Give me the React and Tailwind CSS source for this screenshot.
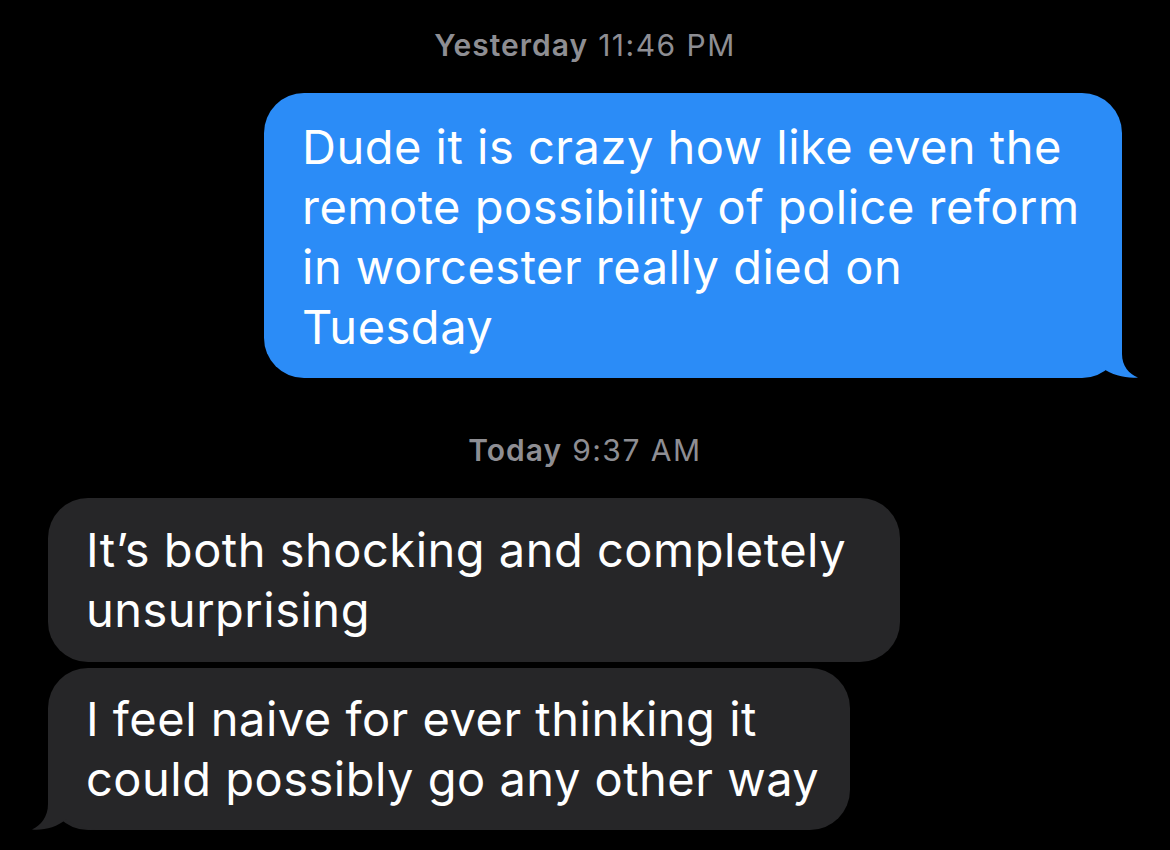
import React from 'react'

const font = { fontFamily: 'Inter, "Noto Sans", "Liberation Sans", sans-serif' }

const Stamp = ({ day, time, className }) => (
  <div
    className={`text-center text-[30px] leading-[34px] tracking-[1.5px] text-[#8e8e93] ${className}`}
  >
    <span className="font-semibold tracking-[1px]">{day}</span> {time}
  </div>
)

const SentTail = () => (
  <svg
    className="absolute bottom-0 right-[-17px]"
    width="66"
    height="50"
    viewBox="0 0 66 50"
  >
    {/* bubble right edge at x=49, bottom at y=50 */}
    <path
      d="M49 0 L49 26 C49 38 56 46 65 49.5 C53 50.5 40 47.5 29 40 C21 46 12 50 0 50 L0 0 Z"
      fill="#2b8cf7"
    />
  </svg>
)

const ReceivedTail = () => (
  <svg
    className="absolute bottom-0 left-[-17px]"
    width="66"
    height="50"
    viewBox="0 0 66 50"
  >
    <path
      d="M17 0 L17 24 C17 37 10 45 1 49.5 C13 50.5 25 47.5 36 39 C44 46 54 50 66 50 L66 0 Z"
      fill="#262628"
    />
  </svg>
)

const Bubble = ({ lines, sent, tail, className }) => (
  <div
    className={`relative rounded-[40px] pl-[38px] text-[47px] leading-[60px] tracking-[0.5px] text-white ${
      sent ? 'bg-[#2b8cf7]' : 'bg-[#262628]'
    } ${className}`}
  >
    {tail && (sent ? <SentTail /> : <ReceivedTail />)}
    <div className="relative">
      {lines.map((line, i) => (
        <div key={i} className="whitespace-nowrap">
          {line}
        </div>
      ))}
    </div>
  </div>
)

export default function App() {
  return (
    <div className="h-[850px] w-[1170px] overflow-hidden bg-black" style={font}>
      <div className="flex flex-col px-[48px] pt-[28px]">
        <Stamp day="Yesterday" time="11:46 PM" />

        <div className="mt-[31px] flex justify-end">
          <Bubble
            sent
            tail
            className="w-[858px] pt-[24px] pb-[21px]"
            lines={[
              'Dude it is crazy how like even the',
              'remote possibility of police reform',
              'in worcester really died on',
              'Tuesday',
            ]}
          />
        </div>

        <Stamp day="Today" time="9:37 AM" className="mt-[55px]" />

        <div className="mt-[31px] flex flex-col items-start gap-[6px]">
          <Bubble
            className="w-[852px] pt-[22px] pb-[22px]"
            lines={['It’s both shocking and completely', 'unsurprising']}
          />
          <Bubble
            tail
            className="w-[802px] pt-[21px] pb-[21px]"
            lines={['I feel naive for ever thinking it', 'could possibly go any other way']}
          />
        </div>
      </div>
    </div>
  )
}
